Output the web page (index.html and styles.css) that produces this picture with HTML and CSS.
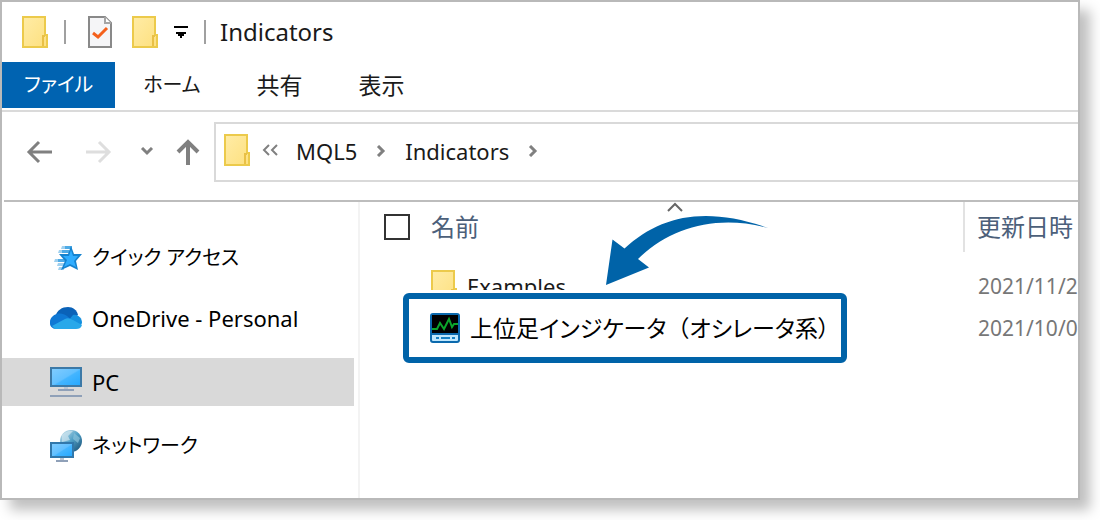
FILE: index.html
```html
<!DOCTYPE html>
<html lang="ja">
<head>
  <meta charset="UTF-8">
  <meta name="viewport" content="width=device-width, initial-scale=1">
  <title>Indicators</title>
  <link rel="stylesheet" href="styles.css">
</head>
<body>

  <svg class="defs" width="0" height="0">
    <defs>
      <linearGradient id="folderFill" x1="0" y1="0" x2="1" y2="1">
        <stop offset="0" stop-color="#ffeca6"/>
        <stop offset="1" stop-color="#fde07f"/>
      </linearGradient>
      <linearGradient id="screenFill" x1="0" y1="0" x2="1" y2="1">
        <stop offset="0" stop-color="#83cdff"/>
        <stop offset="0.5" stop-color="#62c0ff"/>
        <stop offset="0.55" stop-color="#44b5ff"/>
        <stop offset="1" stop-color="#22a7ff"/>
      </linearGradient>
      <linearGradient id="globeFill" x1="0" y1="0" x2="1" y2="1">
        <stop offset="0" stop-color="#d4e8f0"/>
        <stop offset="0.5" stop-color="#4f9fc6"/>
        <stop offset="1" stop-color="#164a70"/>
      </linearGradient>
      <symbol id="folder" viewBox="0 0 26 32">
        <path d="M1 1h22v18h2v12H1z" fill="url(#folderFill)" stroke="#ecca4b" stroke-width="2"/>
        <path d="M21 30V20h2" fill="none" stroke="#e9c046" stroke-width="2"/>
      </symbol>
    </defs>
  </svg>

  <div class="window">
    <header class="titlebar">
      <svg class="folder" aria-hidden="true"><use href="#folder"/></svg>
      <span class="divider"></span>
      <button class="icon-btn check" aria-label="プロパティ">
        <svg width="24" height="32" viewBox="0 0 24 32">
          <path d="M1 1h16l6 6v24H1z" fill="#f5f5f7" stroke="#898989" stroke-width="2"/>
          <path d="M17 1v6h6" fill="#fff" stroke="#a5a5a5" stroke-width="2"/>
          <path d="M5 17l5 4 9-9" fill="none" stroke="#f4601c" stroke-width="3"/>
        </svg>
      </button>
      <button class="icon-btn" aria-label="新しいフォルダー">
        <svg class="folder"><use href="#folder"/></svg>
      </button>
      <button class="icon-btn more" aria-label="カスタマイズ">
        <svg width="14" height="12" viewBox="0 0 14 12"><path d="M0 0h14v2H0zM2 6h10v2h-2v2H8v2H6v-2H4V8H2z"/></svg>
      </button>
      <span class="divider"></span>
      <h1>Indicators</h1>
    </header>

    <nav class="tabs">
      <button class="active kana">ファイル</button>
      <button class="kana">ホーム</button>
      <button>共有</button>
      <button>表示</button>
    </nav>

    <div class="address-row">
      <div class="history">
        <button class="icon-btn" aria-label="戻る">
          <svg width="26" height="24" viewBox="0 0 26 24"><path d="M26 12H3M13 2L3 12l10 10" fill="none" stroke="#808080" stroke-width="3"/></svg>
        </button>
        <button class="icon-btn next" aria-label="進む" disabled>
          <svg width="26" height="24" viewBox="0 0 26 24"><path d="M0 12h23M13 2l10 10-10 10" fill="none" stroke="#dedede" stroke-width="3"/></svg>
        </button>
        <button class="icon-btn recent" aria-label="履歴">
          <svg width="14" height="10" viewBox="0 0 14 10"><path d="M2 1l5 5 5-5" fill="none" stroke="#808080" stroke-width="3"/></svg>
        </button>
        <button class="icon-btn up" aria-label="上へ">
          <svg width="24" height="26" viewBox="0 0 24 26"><path d="M12 26V3M2 13L12 3l10 10" fill="none" stroke="#808080" stroke-width="4"/></svg>
        </button>
      </div>
      <div class="address">
        <svg class="folder" aria-hidden="true"><use href="#folder"/></svg>
        <svg class="laquo" width="16" height="12" viewBox="0 0 16 12"><path d="M7 1L2 6l5 5M15 1l-5 5 5 5" fill="none" stroke="#808080" stroke-width="2"/></svg>
        <a href="#">MQL5</a>
        <svg class="sep" width="10" height="12" viewBox="0 0 10 12"><path d="M2 1l5 5-5 5" fill="none" stroke="#808080" stroke-width="3"/></svg>
        <a href="#">Indicators</a>
        <svg class="sep" width="10" height="12" viewBox="0 0 10 12"><path d="M2 1l5 5-5 5" fill="none" stroke="#808080" stroke-width="3"/></svg>
      </div>
    </div>

    <div class="content">
      <nav class="sidebar">
        <a href="#" class="quick kana">
          <svg width="32" height="26" viewBox="0 0 32 26">
            <path d="M12 1h10v3H11zM9 5h11v3H8zM5 14h10v3H4zM8 18h6v3H7zM9 22h5v3H8z" fill="#9fd0ef"/>
            <path d="M15 1h7v3h-7zM12 5h7v3h-7zM8 14h7v3H8z" fill="#4fabe6"/>
            <path d="M21 1l3 8h8l-6 7 2 9-8-4-9 4 4-9-6-7h9z" fill="#1583cf"/>
            <path d="M21 5l2 6h5l-4 5 2 6-6-3-6 3 3-7-4-4h6z" fill="#2fadff"/>
          </svg>
          クイック アクセス
        </a>
        <a href="#">
          <svg width="32" height="22" viewBox="0 0 32 22">
            <path d="M5 10C7 3 12 0 18 0c5 0 9 3 10 8l-9 6z" fill="#0a62b8"/>
            <path d="M6 22a6 6 0 0 1-6-7c0-4 3-7 7-8 4-1 7 0 10 2l6 5z" fill="#0f78d4"/>
            <path d="M18 14l5-6c5-1 9 3 9 8l-2 4z" fill="#1490df"/>
            <path d="M5 22l-3-3 13-7c3-2 6 0 8 1l9 5c-1 3-3 4-6 4z" fill="#28a8ea"/>
          </svg>
          OneDrive - Personal
        </a>
        <a href="#" class="selected">
          <svg width="32" height="30" viewBox="0 0 32 30">
            <path d="M1 1h30v18H1z" fill="url(#screenFill)" stroke="#3c79a7" stroke-width="2"/>
            <path d="M14 20h4v2h-4z" fill="#bcc5d2"/>
            <path d="M8 22h16v2H8zM0 28h32v2H0z" fill="#8fa0b8"/>
          </svg>
          PC
        </a>
        <a href="#" class="kana">
          <svg width="32" height="32" viewBox="0 0 32 32">
            <circle cx="21" cy="11" r="11" fill="url(#globeFill)"/>
            <path d="M12 5c4-4 8-5 11-4l-5 5 2 4-8 2z" fill="#cfe6ef" opacity=".7"/>
            <path d="M24 3l6 5-2 5-5-4z" fill="#8cc3dc" opacity=".7"/>
            <path d="M1 13h22v14H1z" fill="url(#screenFill)" stroke="#3278ab" stroke-width="2"/>
            <path d="M10 28h4v2h-4z" fill="#bcc5d2"/>
            <path d="M6 30h12v2H6z" fill="#8fa0b8"/>
          </svg>
          ネットワーク
        </a>
      </nav>

      <main class="files">
        <table>
          <thead>
            <tr>
              <th class="pick"><input type="checkbox" aria-label="すべて選択"></th>
              <th class="name">名前
                <svg class="sort" width="16" height="10" viewBox="0 0 16 10"><path d="M1 9l7-7 7 7" fill="none" stroke="#666" stroke-width="2"/></svg>
              </th>
              <th class="date">更新日時</th>
            </tr>
          </thead>
          <tbody>
            <tr>
              <td></td>
              <td><a href="#" class="file"><svg class="folder" aria-hidden="true"><use href="#folder"/></svg>Examples</a></td>
              <td class="date">2021/11/2</td>
            </tr>
            <tr>
              <td></td>
              <td class="marked">
                <a href="#" class="callout">
                  <svg width="30" height="30" viewBox="0 0 30 30">
                    <rect x="1" y="1" width="28" height="28" rx="2" fill="#bfe7fd" stroke="#0b69ad" stroke-width="2"/>
                    <path d="M2 2h26v18H2z"/>
                    <path d="M1 20h28v2H1z" fill="#0b69ad"/>
                    <path d="M2 16h5l3-6 4 6 5-10 3 8 2-3h4" fill="none" stroke="#0ba52b" stroke-width="2"/>
                    <path d="M6 24h3v2H6zM11 24h9v2h-9zM22 24h3v2h-3z" fill="#1681c4"/>
                  </svg>
                  <span>上位足インジケータ<span class="wide">（</span>オシレータ系）</span>
                </a>
                <svg class="pointer" width="163" height="71" viewBox="0 0 163 71"><path d="M0 70L6.500 24.500l12 9C55 0 100-9 162 13 112-1 64 12 32 44l11 8.500z" fill="#0063a8"/></svg>
              </td>
              <td class="date">2021/10/0</td>
            </tr>
          </tbody>
        </table>
      </main>
    </div>
  </div>

</body>
</html>
```
FILE: styles.css
```css
* {
  box-sizing: border-box;
}

body {
  margin: 0;
  padding: 0 20px 20px 0;
  height: 100vh;
  display: flex;
  background: #fff;
  color: #1a1a1a;
  font-family: "Noto Sans", "Noto Sans CJK JP", sans-serif;
  font-size: 22px;
  line-height: 32px;
  font-feature-settings: "palt";
  overflow: hidden;
}

button {
  font: inherit;
  font-feature-settings: inherit;
  color: inherit;
  background: none;
  border: 0;
  padding: 0;
}

a {
  color: inherit;
  text-decoration: none;
}

svg {
  display: block;
  flex: none;
}

.defs {
  position: absolute;
}

.window {
  flex: 1;
  min-width: 0;
  display: flex;
  flex-direction: column;
  border: 2px solid #b9b9b9;
  background: #fff;
  box-shadow: 10px 10px 12px rgba(0, 0, 0, 0.25);
}

.folder {
  width: 26px;
  height: 32px;
}

.icon-btn {
  display: flex;
}

/* title bar */
.titlebar {
  height: 60px;
  display: flex;
  align-items: center;
  padding-left: 20px;
}

.titlebar h1 {
  margin: 0 0 0 14px;
  font-size: 24px;
  font-weight: 400;
}

.divider {
  width: 2px;
  height: 24px;
  margin-left: 16px;
  background: #a0a0a0;
}

.check {
  margin: 0 20px 0 22px;
}

.more {
  margin-left: 16px;
}

/* ribbon tabs */
.tabs {
  display: flex;
  height: 50px;
  padding-bottom: 2px;
  border-bottom: 2px solid #dadada;
}

.tabs button {
  padding: 0 28px;
  font-size: 23px;
}

.tabs .kana {
  font-size: 20px;
}

.tabs .active {
  padding: 0 22px;
  background: #0063b1;
  color: #fff;
}

/* address bar */
.address-row {
  display: flex;
  align-items: center;
  padding: 10px 0 18px;
  margin-left: 2px;
  border-bottom: 2px solid #bdbdbd;
}

.history {
  width: 210px;
  display: flex;
  align-items: center;
  padding-left: 22px;
}

.next {
  margin-left: 34px;
}

.recent {
  margin-left: 28px;
}

.up {
  margin-left: 22px;
}

.address {
  flex: 1;
  height: 60px;
  display: flex;
  align-items: center;
  padding: 0 8px 4px;
  border: 2px solid #d9d9d9;
  border-right: 0;
}

.address a {
  padding-top: 2px;
}

.laquo {
  margin: 0 18px 0 12px;
}

.sep {
  margin: 2px 19px 0;
}

/* lower part */
.content {
  flex: 1;
  display: flex;
  min-height: 0;
}

.sidebar {
  width: 358px;
  padding: 32px 4px 0 0;
  border-right: 2px solid #f3f3f3;
  color: #000;
}

.sidebar a {
  height: 48px;
  display: flex;
  align-items: center;
  gap: 10px;
  padding-left: 48px;
  margin-bottom: 16px;
  line-height: 28px;
}

.sidebar .quick {
  margin-bottom: 12px;
}

.sidebar .selected {
  background: #d9d9d9;
}

.sidebar .kana {
  font-size: 20px;
}

.files {
  flex: 1;
  min-width: 0;
  overflow: hidden;
}

table {
  width: 100%;
  table-layout: fixed;
  border-collapse: collapse;
}

th,
td {
  padding: 0;
  height: 42px;
  font-weight: 400;
  text-align: left;
  white-space: nowrap;
}

th {
  height: 50px;
  color: #4c607a;
  font-size: 24px;
}

.pick {
  width: 71px;
  padding-left: 24px;
}

.pick input {
  display: block;
  appearance: none;
  width: 26px;
  height: 26px;
  margin: 0;
  border: 2px solid #333;
}

.name {
  position: relative;
}

.sort {
  position: absolute;
  top: 0;
  left: 236px;
}

.date {
  width: 114px;
  padding-left: 12px;
}

th.date {
  border-left: 2px solid #e2e2e2;
}

td.date {
  padding-left: 14px;
  color: #777;
  font-size: 21px;
}

tbody::before {
  content: "";
  display: block;
  height: 13px;
}

.file {
  display: flex;
  align-items: center;
  gap: 10px;
}

/* highlighted file */
.marked {
  position: relative;
}

.callout {
  position: absolute;
  top: -14px;
  left: -28px;
  height: 70px;
  display: flex;
  align-items: center;
  gap: 10px;
  padding: 0 12px 0 21px;
  border: 6px solid #0063a8;
  border-radius: 6px;
  background: #fff;
  box-shadow: 0 0 0 3px #fff;
  color: #000;
  font-size: 23px;
}

.wide {
  font-feature-settings: normal;
}

.pointer {
  position: absolute;
  top: -92px;
  left: 175px;
}
```
